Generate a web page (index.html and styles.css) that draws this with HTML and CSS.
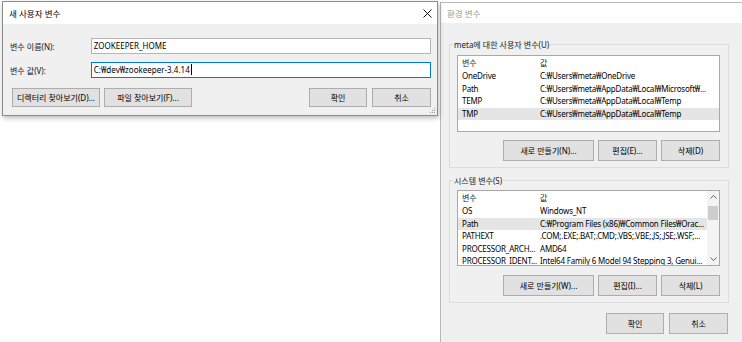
FILE: index.html
```html
<!DOCTYPE html>
<html lang="ko">
<head>
    <meta charset="UTF-8">
    <title>환경 변수</title>
    <link rel="stylesheet" href="styles.css">
</head>
<body>
    <div class="desktop">
        <section class="window env-window">
            <div class="titlebar titlebar-inactive">환경 변수</div>
            <div class="env-body">
                <div class="group group-user">
                    <span class="group-label">meta에 대한 사용자 변수(U)</span>
                    <div class="list list-user">
                        <div class="list-rows">
                            <div class="list-row list-head"><span class="col-name">변수</span><span class="col-value">값</span></div>
                            <div class="list-row"><span class="col-name">OneDrive</span><span class="col-value">C:₩Users₩meta₩OneDrive</span></div>
                            <div class="list-row"><span class="col-name">Path</span><span class="col-value">C:₩Users₩meta₩AppData₩Local₩Microsoft₩...</span></div>
                            <div class="list-row"><span class="col-name">TEMP</span><span class="col-value">C:₩Users₩meta₩AppData₩Local₩Temp</span></div>
                            <div class="list-row selected"><span class="col-name">TMP</span><span class="col-value">C:₩Users₩meta₩AppData₩Local₩Temp</span></div>
                        </div>
                    </div>
                    <div class="button-row">
                        <button class="btn btn-wide">새로 만들기(N)...</button>
                        <button class="btn">편집(E)...</button>
                        <button class="btn">삭제(D)</button>
                    </div>
                </div>

                <div class="group group-system">
                    <span class="group-label">시스템 변수(S)</span>
                    <div class="list list-system">
                        <div class="list-rows">
                            <div class="list-row list-head"><span class="col-name">변수</span><span class="col-value">값</span></div>
                            <div class="list-row"><span class="col-name">OS</span><span class="col-value">Windows_NT</span></div>
                            <div class="list-row selected"><span class="col-name">Path</span><span class="col-value">C:₩Program Files (x86)₩Common Files₩Orac...</span></div>
                            <div class="list-row"><span class="col-name">PATHEXT</span><span class="col-value">.COM;.EXE;.BAT;.CMD;.VBS;.VBE;.JS;.JSE;.WSF;...</span></div>
                            <div class="list-row"><span class="col-name">PROCESSOR_ARCH...</span><span class="col-value">AMD64</span></div>
                            <div class="list-row"><span class="col-name">PROCESSOR_IDENT...</span><span class="col-value">Intel64 Family 6 Model 94 Stepping 3, Genui...</span></div>
                        </div>
                        <div class="scrollbar">
                            <svg class="arrow" width="7" height="4" viewBox="0 0 7 4"><path d="M0.5 3.5 L3.5 0.5 L6.5 3.5" fill="none" stroke="#606060" stroke-width="1"/></svg>
                            <div class="scroll-track"><div class="scroll-thumb"></div></div>
                            <svg class="arrow" width="7" height="4" viewBox="0 0 7 4"><path d="M0.5 0.5 L3.5 3.5 L6.5 0.5" fill="none" stroke="#606060" stroke-width="1"/></svg>
                        </div>
                    </div>
                    <div class="button-row">
                        <button class="btn btn-wide">새로 만들기(W)...</button>
                        <button class="btn">편집(I)...</button>
                        <button class="btn">삭제(L)</button>
                    </div>
                </div>

                <div class="footer-row">
                    <button class="btn btn-ok">확인</button>
                    <button class="btn">취소</button>
                </div>
            </div>
        </section>

        <section class="window new-window">
            <div class="titlebar">
                <span>새 사용자 변수</span>
                <svg class="close-icon" width="9" height="9" viewBox="0 0 9 9"><path d="M0.5 0.5 L8.5 8.5 M8.5 0.5 L0.5 8.5" stroke="#111" stroke-width="1"/></svg>
            </div>
            <div class="new-body">
                <div class="form-row">
                    <label class="form-label">변수 이름(N):</label>
                    <div class="field">ZOOKEEPER_HOME</div>
                </div>
                <div class="form-row">
                    <label class="form-label">변수 값(V):</label>
                    <div class="field field-focus">C:₩dev₩zookeeper-3.4.14<span class="caret"></span></div>
                </div>
                <div class="dialog-buttons">
                    <button class="btn btn-browse">디렉터리 찾아보기(D)...</button>
                    <button class="btn btn-browse">파일 찾아보기(F)...</button>
                    <span class="spacer"></span>
                    <button class="btn btn-ok">확인</button>
                    <button class="btn">취소</button>
                </div>
            </div>
            <svg class="grip" width="7" height="7" viewBox="0 0 7 7">
                <rect x="5" y="1" width="1" height="1" fill="#999"/>
                <rect x="3" y="3" width="1" height="1" fill="#999"/>
                <rect x="5" y="3" width="1" height="1" fill="#999"/>
                <rect x="1" y="5" width="1" height="1" fill="#999"/>
                <rect x="3" y="5" width="1" height="1" fill="#999"/>
                <rect x="5" y="5" width="1" height="1" fill="#999"/>
            </svg>
        </section>
    </div>
</body>
</html>
```

FILE: styles.css
```css
* {
    box-sizing: border-box;
    margin: 0;
    padding: 0;
}

body {
    width: 742px;
    height: 342px;
    overflow: hidden;
    background-color: #ffffff;
    font-family: 'Noto Sans', 'Noto Sans CJK KR', sans-serif;
    font-size: 8px;
    color: #000000;
}

.desktop {
    position: relative;
    width: 742px;
    height: 342px;
    overflow: hidden;
}

/* windows on the desktop */
.window {
    position: absolute;
    background-color: #f0f0f0;
}

.env-window {
    left: 440px;
    top: 2px;
    width: 302px;
    height: 340px;
    border: 1px solid #b9b9b9;
    border-right: none;
    border-bottom: none;
}

.new-window {
    left: 2px;
    top: 1px;
    width: 436px;
    height: 115px;
    border: 1px solid #8c8c8c;
    box-shadow: 1px 2px 5px rgba(0, 0, 0, 0.28);
}

.titlebar {
    display: flex;
    align-items: center;
    justify-content: space-between;
    height: 22px;
    padding: 0 5px 0 6px;
    background-color: #ffffff;
    font-size: 8.5px;
}

.titlebar-inactive {
    height: 20px;
    color: #9a9a9a;
}

.close-icon {
    display: block;
}

/* environment dialog */
.env-body {
    padding: 21px 0 0 8px;
}

.group {
    position: relative;
    width: 280px;
    border: 1px solid #dcdcdc;
    padding: 10px 8px 6px 7px;
}

.group-system {
    margin-top: 12px;
    padding-top: 9px;
}

.group-label {
    position: absolute;
    top: -7px;
    left: 3px;
    padding: 0 1px;
    line-height: 13px;
    background-color: #f0f0f0;
    color: #222;
}

.list {
    display: flex;
    background-color: #ffffff;
    border: 1px solid #a8a8a8;
    overflow: hidden;
}

.list-user {
    height: 77px;
}

.list-system {
    height: 76px;
}

.list-rows {
    flex: 1;
    min-width: 0;
}

.list-row {
    display: flex;
    height: 12.5px;
    line-height: 12.5px;
    letter-spacing: -0.2px;
    white-space: nowrap;
}

.list-head {
    height: 14px;
    line-height: 14px;
    letter-spacing: 0;
    color: #1e1e1e;
}

.list-row.selected {
    background-color: #e5e5e5;
}

.col-name {
    flex: none;
    width: 82px;
    padding-left: 4px;
    overflow: hidden;
}

.col-value {
    flex: 1;
    overflow: hidden;
}

.scrollbar {
    display: flex;
    flex-direction: column;
    align-items: center;
    width: 12px;
    background-color: #f4f4f4;
}

.arrow {
    display: block;
    margin: 4px 0;
}

.scroll-track {
    flex: 1;
    width: 100%;
}

.scroll-thumb {
    width: 10px;
    height: 14px;
    margin: 3px auto 0;
    background-color: #cdcdcd;
}

.button-row {
    display: flex;
    justify-content: flex-end;
    gap: 4px;
    margin-top: 8px;
}

.group-system .button-row {
    margin-top: 9px;
}

.btn {
    width: 59px;
    height: 21px;
    background-color: #e1e1e1;
    border: 1px solid #adadad;
    font-family: inherit;
    font-size: 8px;
    color: #000000;
    line-height: 1;
}

.btn-wide {
    width: 91px;
}

.btn-ok {
    width: 58px;
}

.footer-row {
    display: flex;
    justify-content: flex-end;
    gap: 5px;
    width: 279px;
    margin-top: 10px;
}

/* new user variable dialog */
.new-body {
    padding: 14px 6px 0 7px;
}

.form-row {
    display: flex;
    align-items: center;
    margin-bottom: 8px;
}

.form-label {
    width: 81px;
    color: #111;
}

.field {
    width: 341px;
    height: 16px;
    line-height: 14px;
    padding-left: 2px;
    background-color: #ffffff;
    border: 1px solid #b5b5b5;
    white-space: nowrap;
}

.field-focus {
    border-color: #0078d7;
}

.caret {
    display: inline-block;
    width: 1px;
    height: 11px;
    margin-left: 1px;
    vertical-align: -2px;
    background-color: #000000;
}

.dialog-buttons {
    display: flex;
    gap: 5px;
    margin-top: 10px;
    padding-left: 2px;
}

.dialog-buttons .btn {
    height: 19px;
}

.dialog-buttons .btn-browse {
    width: 88px;
    margin-right: -1px;
}

.spacer {
    flex: 1;
}

.grip {
    position: absolute;
    right: 1px;
    bottom: 1px;
}
```
